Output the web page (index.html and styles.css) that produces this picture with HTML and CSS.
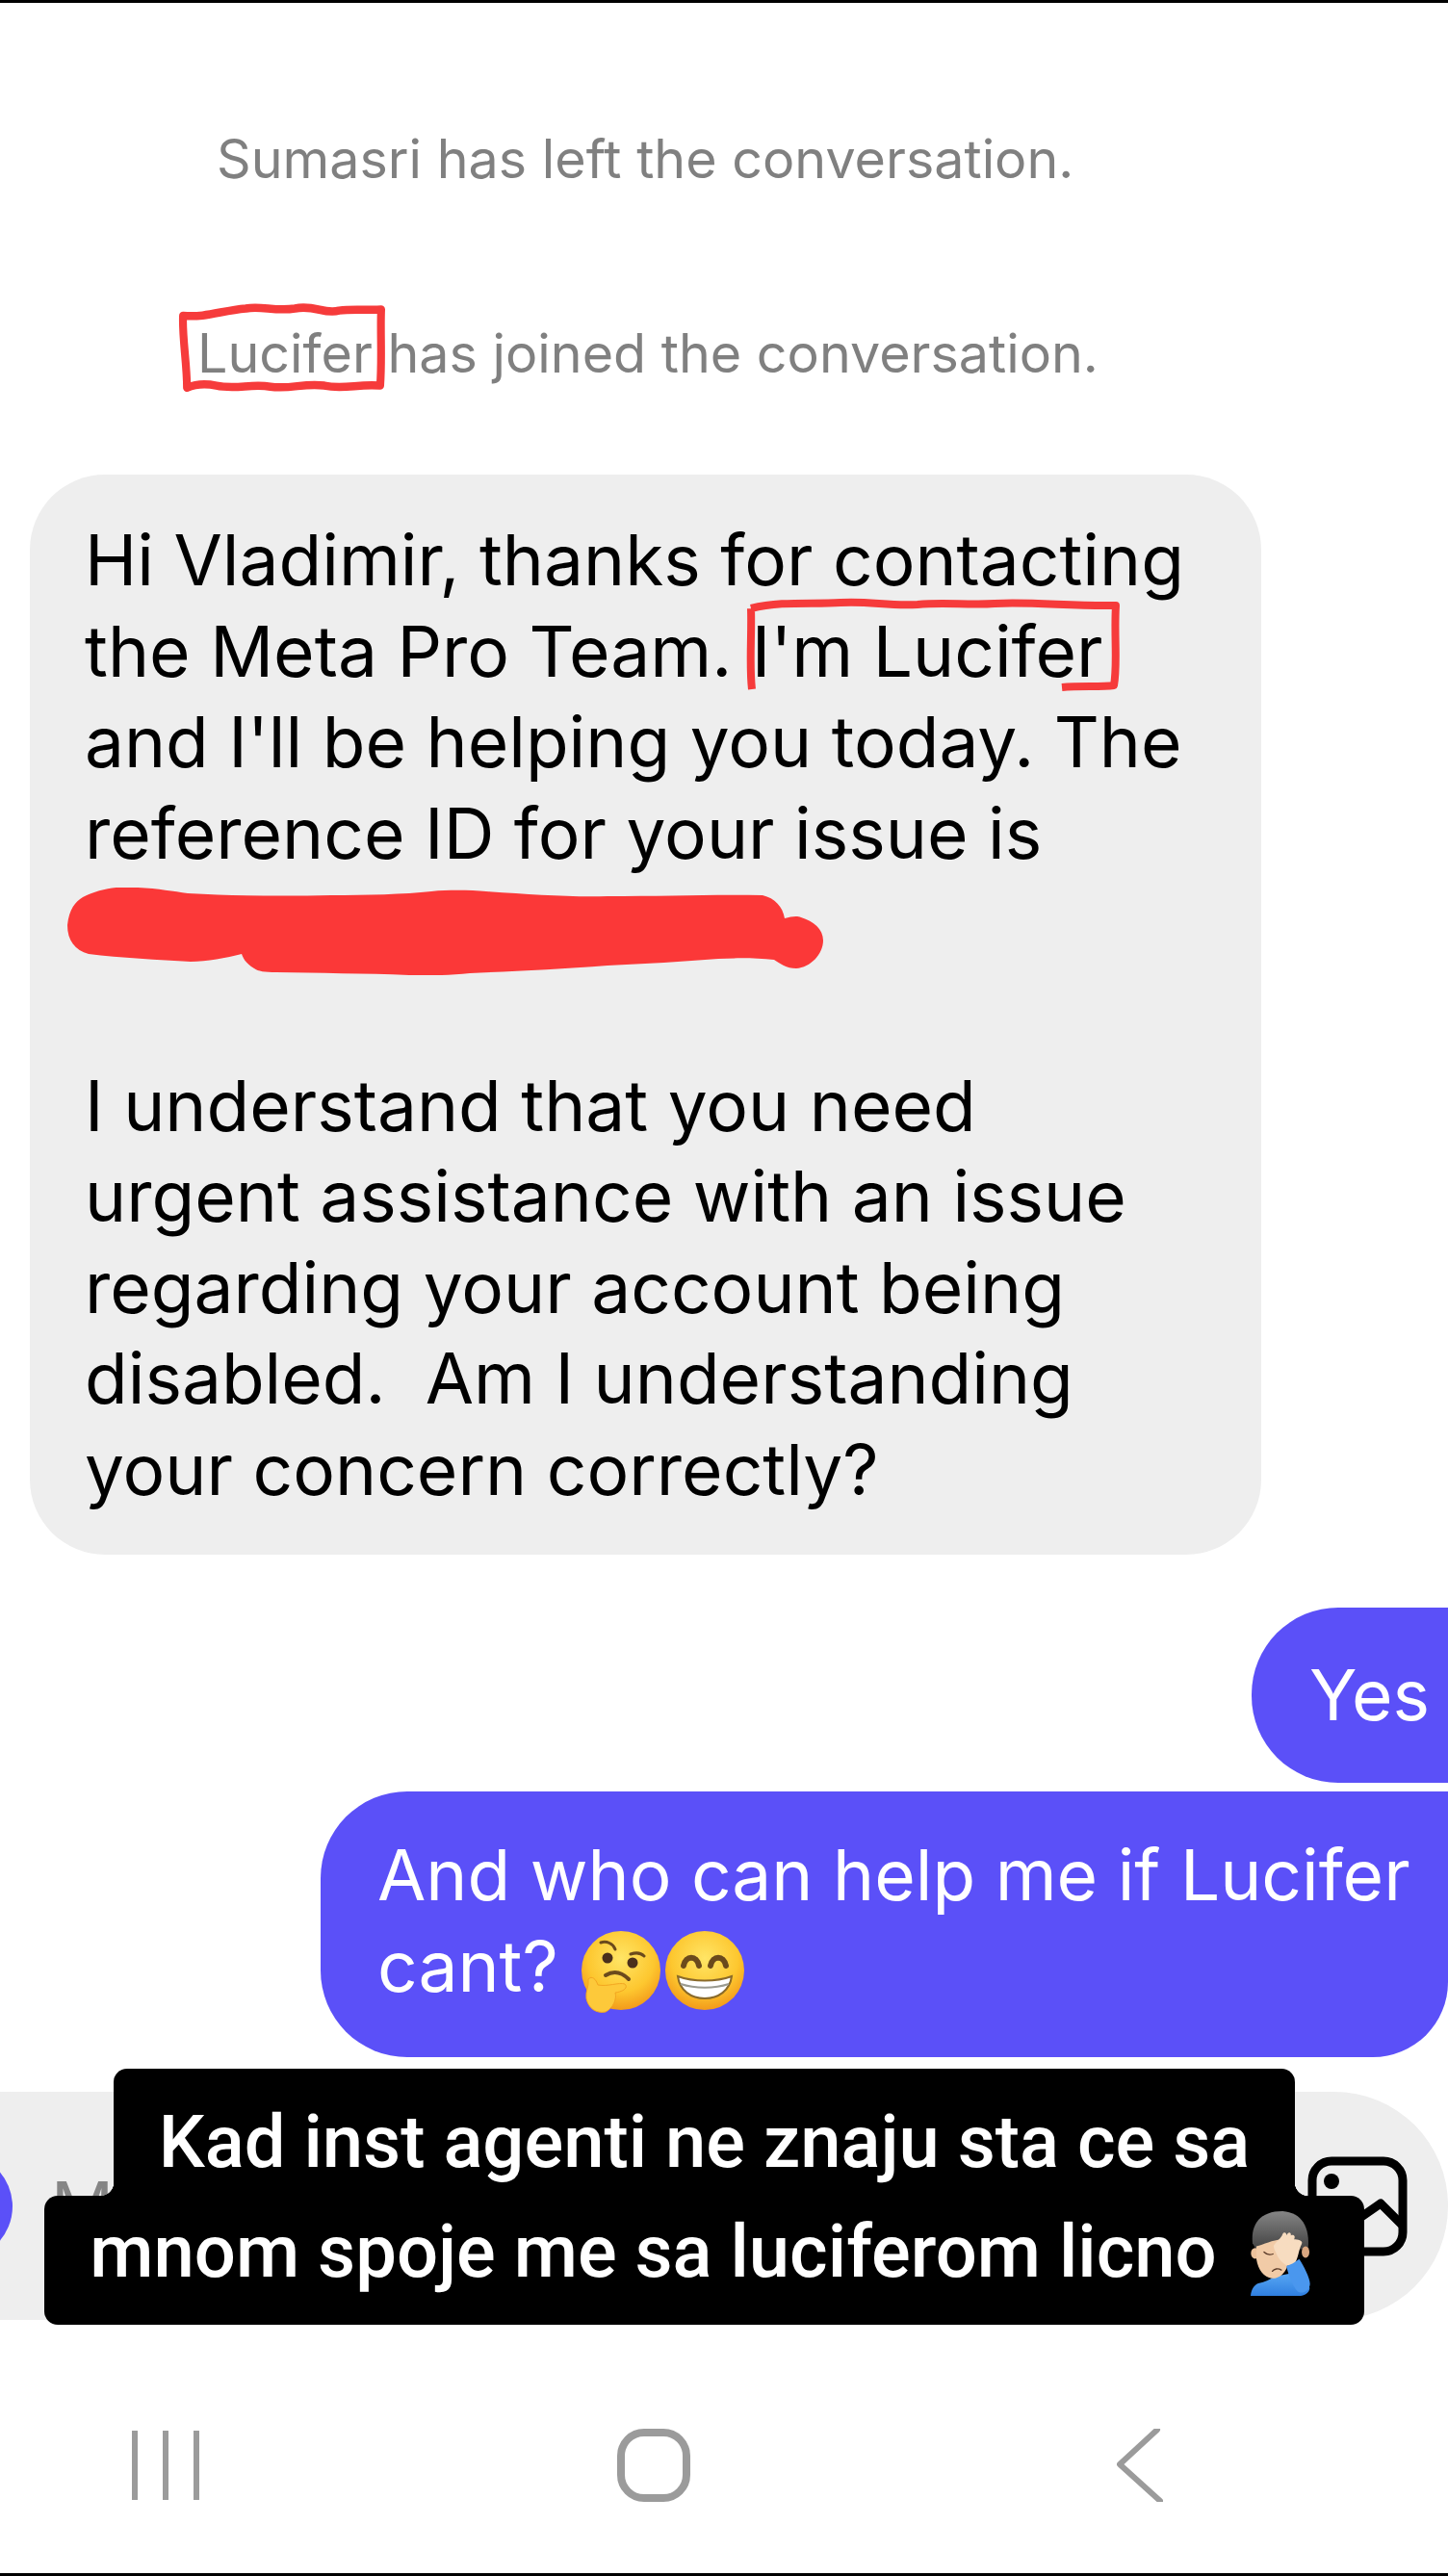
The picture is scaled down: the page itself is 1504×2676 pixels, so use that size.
FILE: index.html
```html
<!DOCTYPE html>
<html lang="en">
<head>
  <meta charset="UTF-8">
  <meta name="viewport" content="width=device-width, initial-scale=1.0">
  <link rel="stylesheet" href="styles.css">
</head>
<body>

<svg class="defs" width="0" height="0">
  <defs>
    <radialGradient id="faceFill" cx="50%" cy="35%" r="65%">
      <stop offset="0%" stop-color="#ffe566"/>
      <stop offset="65%" stop-color="#fdc72f"/>
      <stop offset="100%" stop-color="#f39a1a"/>
    </radialGradient>
    <linearGradient id="shirtFill" x1="0" y1="0" x2="0" y2="1">
      <stop offset="0%" stop-color="#5aa9f5"/>
      <stop offset="100%" stop-color="#2f7fe0"/>
    </linearGradient>
    <linearGradient id="hairFill" x1="0" y1="0" x2="0" y2="1">
      <stop offset="0%" stop-color="#858585"/>
      <stop offset="100%" stop-color="#3f3f3f"/>
    </linearGradient>
  </defs>
</svg>

<div class="screen">
  <div class="chat">
    <p class="sys-msg sys-left">Sumasri has left the conversation.</p>
    <p class="sys-msg sys-joined">
      <span class="marked">Lucifer
        <svg class="mark mark-name" viewBox="0 0 212 88" preserveAspectRatio="none">
          <path d="M6 14 C30 16 45 9 70 7 C85 4 100 10 120 7 C140 3 150 13 165 9 C180 7 195 9 208 8 C207 30 209 55 207 82 C185 80 170 86 150 82 C130 79 115 86 95 83 C75 80 60 86 40 82 C30 80 20 80 10 84 C10 60 5 35 6 14 Z"/>
        </svg>
      </span> has joined the conversation.
    </p>

    <div class="bubble bubble-in">
      Hi Vladimir, thanks for contacting<br>
      the Meta Pro Team. <span class="marked">I'm Lucifer
        <svg class="mark mark-intro" viewBox="0 0 392 100" preserveAspectRatio="none">
          <path d="M7 12 C40 4 70 8 100 6 C130 4 150 10 180 8 C210 5 230 9 260 7 C300 5 340 10 386 9 C384 40 388 70 384 92 C370 94 350 92 330 94 M7 12 C8 40 5 70 8 96"/>
        </svg>
      </span><br>
      and I'll be helping you today. The<br>
      reference ID for your issue is<br>
      <svg class="redact" viewBox="70 923 785 91">
        <path d="M70 962 C72 945 78 938 86 933 C105 923 130 921 143 923 C165 924 180 927 195 929 C250 932 300 932 344 931 C380 931 420 930 448 927 C470 925 490 926 505 927 C550 930 590 933 631 932 C690 932 740 930 792 931 C805 934 813 943 815 955 C822 953 828 952 832 954 C845 958 855 966 855 978 C855 992 842 1006 827 1007 C817 1007 810 1002 804 998 C785 996 765 996 746 997 C710 1000 670 1002 631 1004 C580 1008 530 1010 488 1012 C465 1014 445 1015 425 1014 C380 1012 330 1012 287 1011 C275 1011 268 1010 264 1007 C257 1003 253 998 251 992 C235 996 215 1000 198 1000 C165 998 125 996 92 992 C78 988 70 978 70 962 Z"/>
      </svg>
      <br>
      I understand that you need<br>
      urgent assistance with an issue<br>
      regarding your account being<br>
      disabled.&nbsp; Am I understanding<br>
      your concern correctly?
    </div>

    <div class="bubble bubble-out bubble-yes">Yes</div>
    <div class="bubble bubble-out bubble-who">
      And who can help me if Lucifer<br>
      cant?
      <svg class="emoji emoji-think" viewBox="0 0 84 86">
        <circle cx="42" cy="41" r="41" fill="url(#faceFill)"/>
        <path d="M21 12 C27 10 34 13 36 19" class="brow"/>
        <path d="M52 24 C58 22 63 23 66 26" class="brow"/>
        <circle cx="28" cy="28" r="5.5" fill="#4a2f1c"/>
        <circle cx="54" cy="33" r="5.5" fill="#4a2f1c"/>
        <path d="M26 46 C34 41 42 42 50 50" class="brow brow-thick"/>
        <path d="M8 50 C12 46 16 50 18 56 C28 58 40 53 46 55 C50 59 44 63 36 64 C38 70 34 80 26 84 C16 86 8 80 6 70 C5 62 9 58 8 50 Z" fill="#fdc93a" stroke="#f3a621" stroke-width="1"/>
      </svg><svg class="emoji emoji-grin" viewBox="0 0 84 86">
        <circle cx="42" cy="41" r="41" fill="url(#faceFill)"/>
        <path d="M20 36 C22 25 34 25 36 36 M48 36 C50 25 62 25 64 36" class="brow brow-eye"/>
        <path d="M14 47 C30 53 54 53 70 47 C68 62 56 70 42 70 C28 70 16 62 14 47 Z" fill="#fff" stroke="#8a6a2a" stroke-width="2"/>
        <path d="M17 55 C32 60 52 60 67 55" fill="none" stroke="#9a9a90" stroke-width="2"/>
      </svg>
    </div>
  </div>

  <div class="composer">
    <span class="send-dot"></span>
    <span class="composer-text">Message</span>
    <svg class="photo-icon" viewBox="0 0 104 104">
      <rect x="5" y="5" width="94" height="94" rx="20"/>
      <circle cx="25" cy="26" r="8" class="photo-dot"/>
      <path d="M40 74 L76 49 L99 72"/>
    </svg>
  </div>

  <div class="navbar">
    <svg class="nav-icon nav-recent" viewBox="0 0 70 72">
      <path d="M3 1 V71 M35 1 V71 M67 1 V71"/>
    </svg>
    <svg class="nav-icon nav-home" viewBox="0 0 76 76">
      <rect x="4" y="4" width="68" height="68" rx="24"/>
    </svg>
    <svg class="nav-icon nav-back" viewBox="0 0 48 76">
      <path d="M42 1 L3 37 L45 75"/>
    </svg>
  </div>

  <div class="caption">
    <div class="caption-line caption-top">Kad inst agenti ne znaju sta ce sa</div>
    <div class="caption-line caption-bottom">
      mnom spoje me sa luciferom licno
      <svg class="emoji emoji-palm" viewBox="0 0 190 265">
        <path d="M0 265 C2 245 10 232 24 226 C45 222 62 212 78 204 L150 190 L185 240 C184 255 170 265 150 265 Z" fill="url(#shirtFill)"/>
        <path d="M6 100 C0 40 30 0 100 0 C160 4 186 50 180 118 L150 120 L20 125 Z" fill="url(#hairFill)"/>
        <ellipse cx="14" cy="132" rx="13" ry="17" fill="#ecc29c"/>
        <ellipse cx="172" cy="128" rx="12" ry="18" fill="#d9a67f"/>
        <path d="M18 110 C40 104 70 90 96 88 C124 96 128 140 116 170 C106 200 84 212 66 210 C42 206 24 186 18 150 Z" fill="#f1cba7"/>
        <path d="M42 128 C50 136 60 138 70 134 M68 188 C74 180 86 178 96 184" fill="none" stroke="#5a3a28" stroke-width="4" stroke-linecap="round"/>
        <path d="M72 108 C82 92 96 84 100 72 C106 62 114 70 112 76 C118 62 128 66 126 76 C134 72 142 78 136 88 C146 88 166 92 160 102 C150 120 150 150 134 170 C116 178 94 160 84 140 C80 128 72 120 72 108 Z" fill="#f7dcc0"/>
        <path d="M112 172 C125 168 140 160 152 150 C166 170 186 210 186 228 C184 250 160 262 146 250 C132 235 118 200 112 172 Z" fill="#4a97ee"/>
      </svg>
    </div>
  </div>
</div>

</body>
</html>
```

FILE: styles.css
```css
body {
  margin: 0;
  background-color: #fff;
  font-family: Inter, "Liberation Sans", sans-serif;
}

.defs {
  position: absolute;
}

.screen {
  position: relative;
  box-sizing: border-box;
  width: 1504px;
  height: 2676px;
  overflow: hidden;
  display: flex;
  flex-direction: column;
  border-top: 3px solid #000;
  border-bottom: 3px solid #000;
}

.chat {
  display: flex;
  flex-direction: column;
}

.sys-msg {
  margin: 0;
  color: #808080;
  font-size: 55.6px;
  line-height: 64px;
  white-space: nowrap;
}

.sys-left {
  margin-top: 130px;
  margin-left: 225px;
}

.sys-joined {
  margin-top: 138px;
  margin-left: 205px;
}

.marked {
  position: relative;
}

.mark {
  position: absolute;
  fill: none;
  stroke: #f63b3b;
  stroke-width: 8;
  stroke-linejoin: round;
}

.mark-name {
  left: -21px;
  top: -20px;
  width: 216px;
  height: 94px;
}

.mark-intro {
  left: -8px;
  top: -12px;
  width: 392px;
  height: 100px;
}

.bubble {
  font-size: 73px;
  line-height: 94.5px;
  white-space: nowrap;
}

.bubble-in {
  box-sizing: border-box;
  margin-top: 94px;
  margin-left: 31px;
  width: 1279px;
  height: 1122px;
  padding: 42px 0 0 57px;
  background-color: #eee;
  color: #000;
  border-radius: 78px;
}

.redact {
  display: block;
  width: 785px;
  height: 91px;
  margin: 9px 0 -6px -18px;
  fill: #fb3838;
}

.bubble-out {
  align-self: flex-end;
  box-sizing: border-box;
  background-color: #5b50f8;
  color: #fff;
}

.bubble-yes {
  margin-top: 55px;
  width: 204px;
  height: 182px;
  padding: 44px 0 0 60px;
  border-radius: 90px 0 0 90px;
}

.bubble-who {
  margin-top: 9px;
  width: 1171px;
  height: 276px;
  padding: 40px 0 0 59px;
  border-radius: 90px 0 78px 90px;
}

.emoji {
  width: 84px;
  height: 86px;
  vertical-align: -23px;
}

.emoji-think {
  margin-left: 3px;
}

.emoji-grin {
  margin-left: 3px;
}

.brow {
  fill: none;
  stroke: #6b4a1c;
  stroke-width: 3;
  stroke-linecap: round;
}

.brow-thick {
  stroke-width: 4;
}

.brow-eye {
  stroke-width: 6;
}

.composer {
  position: absolute;
  left: 0;
  top: 2170px;
  box-sizing: border-box;
  width: 1504px;
  height: 237px;
  display: flex;
  align-items: center;
  background-color: #eee;
  border-radius: 0 118px 118px 0;
}

.send-dot {
  width: 110px;
  height: 110px;
  margin-left: -97px;
  border-radius: 50%;
  background-color: #5b50f8;
}

.composer-text {
  margin-left: 40px;
  color: #858585;
  font-size: 72px;
}

.photo-icon {
  width: 104px;
  height: 104px;
  margin-left: auto;
  margin-right: 42px;
  fill: none;
  stroke: #000;
  stroke-width: 9;
  stroke-linejoin: round;
}

.photo-dot {
  fill: #000;
  stroke: none;
}

.navbar {
  position: absolute;
  left: 137px;
  top: 2520px;
  display: flex;
  align-items: center;
}

.nav-icon {
  display: block;
  fill: none;
  stroke: #9b9b9b;
  stroke-width: 6;
  stroke-linecap: round;
  stroke-linejoin: round;
}

.nav-recent {
  width: 70px;
  height: 72px;
}

.nav-home {
  width: 76px;
  height: 76px;
  margin-left: 434px;
  stroke-width: 8;
}

.nav-back {
  width: 48px;
  height: 76px;
  margin-left: 443px;
}

.caption {
  position: absolute;
  left: 46px;
  top: 2146px;
  width: 1371px;
  display: flex;
  flex-direction: column;
  align-items: center;
  color: #fff;
  font-family: Roboto, sans-serif;
  font-weight: 500;
  font-size: 76px;
  white-space: nowrap;
}

.caption-line {
  background-color: #000;
  text-align: center;
}

.caption-top {
  box-sizing: border-box;
  width: 1227px;
  height: 132px;
  padding-top: 31px;
  line-height: 90px;
  border-radius: 14px 14px 0 0;
}

.caption-bottom {
  position: relative;
  box-sizing: border-box;
  width: 1371px;
  height: 134px;
  padding: 13px 8px 0 0;
  line-height: 90px;
  border-radius: 14px;
}

.caption-bottom::before,
.caption-bottom::after {
  content: "";
  position: absolute;
  bottom: 100%;
  width: 14px;
  height: 14px;
}

.caption-bottom::before {
  left: 58px;
  background: radial-gradient(circle at 0 0, transparent 14px, #000 14.5px);
}

.caption-bottom::after {
  right: 58px;
  background: radial-gradient(circle at 100% 0, transparent 14px, #000 14.5px);
}

.emoji-palm {
  width: 63px;
  height: 88px;
  vertical-align: -20px;
  margin-left: 16px;
}
```
